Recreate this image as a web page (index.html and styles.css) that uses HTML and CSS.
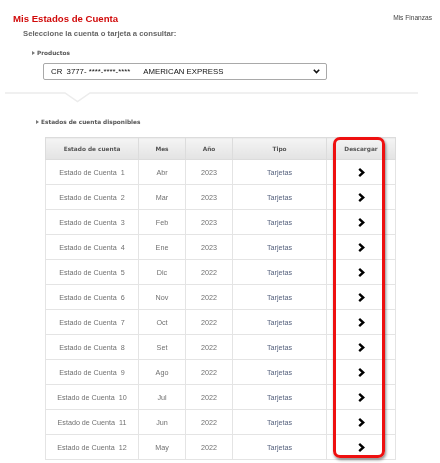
FILE: index.html
```html
<!DOCTYPE html>
<html lang="es">
<head>
<meta charset="utf-8">
<title>Mis Estados de Cuenta</title>
<link rel="stylesheet" href="styles.css">
</head>
<body>
<div class="page">
  <div class="top">
    <h1 class="title">Mis Estados de Cuenta</h1>
    <span class="crumb">Mis Finanzas</span>
  </div>
  <p class="subtitle">Seleccione la cuenta o tarjeta a consultar:</p>
  <div class="label label-products">Productos</div>
  <div class="select">
    <span class="select-text">CR&nbsp;&nbsp;3777-&nbsp;****-****-****&nbsp;&nbsp;&nbsp;&nbsp;&nbsp;&nbsp;AMERICAN EXPRESS</span>
    <svg class="select-arrow" width="7" height="5" viewBox="0 0 7 5"><path d="M0.8 0.8 L3.5 3.6 L6.2 0.8" fill="none" stroke="#111" stroke-width="1.6"/></svg>
  </div>
  <svg class="divider" width="440" height="12" viewBox="0 0 440 12"><polyline points="5,2 65,2 77.5,10.5 90,2 418,2" fill="none" stroke="#ececec" stroke-width="1.5"/></svg>
  <div class="label label-statements">Estados de cuenta disponibles</div>
  <div class="table-wrap">
    <table class="statements">
      <colgroup>
        <col class="c1"><col class="c2"><col class="c3"><col class="c4"><col class="c5">
      </colgroup>
      <thead>
        <tr><th>Estado de cuenta</th><th>Mes</th><th>Año</th><th>Tipo</th><th>Descargar</th></tr>
      </thead>
      <tbody id="rows"></tbody>
    </table>
    <div class="highlight"></div>
  </div>
</div>
<script src="app.js"></script>
</body>
</html>
```
FILE: app.js
```js
var data = [
  ["Abr","2023"],["Mar","2023"],["Feb","2023"],["Ene","2023"],
  ["Dic","2022"],["Nov","2022"],["Oct","2022"],["Set","2022"],
  ["Ago","2022"],["Jul","2022"],["Jun","2022"],["May","2022"]
];
var tbody = document.getElementById("rows");
var html = "";
data.forEach(function (d, i) {
  html += '<tr><td>Estado de Cuenta&nbsp;&nbsp;' + (i + 1) + '</td><td>' + d[0] + '</td><td>' + d[1] +
    '</td><td class="tipo">Tarjetas</td><td><svg class="chev" width="7" height="9" viewBox="0 0 7 9"><path d="M1.2 0.9 L5.2 4.5 L1.2 8.1" fill="none" stroke="#000" stroke-width="2.4"/></svg></td></tr>';
});
tbody.innerHTML = html;
```
FILE: styles.css
```css
* { box-sizing: border-box; }
body {
  margin: 0;
  background: #fff;
  font-family: "Liberation Sans", Arial, sans-serif;
  color: #666;
}
.page {
  width: 440px;
  height: 463px;
  overflow: hidden;
  will-change: transform;
}
.top {
  display: flex;
  justify-content: space-between;
  align-items: center;
  padding: 13px 8px 0 13px;
}
.title {
  margin: 0;
  font-size: 9.6px;
  line-height: 12px;
  font-weight: bold;
  color: #d10a0a;
}
.crumb {
  font-size: 6.6px;
  color: #444;
  line-height: 10px;
  margin-top: -2px;
}
.subtitle {
  margin: 4px 0 0 23px;
  font-size: 7.7px;
  line-height: 10px;
  font-weight: bold;
  color: #666;
}
.label {
  display: flex;
  align-items: center;
  font-family: "DejaVu Sans", Verdana, sans-serif;
  font-size: 5.8px;
  font-weight: bold;
  color: #555;
  line-height: 8px;
}
.label::before {
  content: "";
  display: block;
  width: 0;
  height: 0;
  border-top: 2.5px solid transparent;
  border-bottom: 2.5px solid transparent;
  border-left: 3px solid #777;
  margin-right: 2px;
}
.label-products {
  margin: 10px 0 0 32px;
}
.select {
  margin: 6px 0 0 43px;
  width: 284px;
  height: 17px;
  border: 1px solid #a9a9a9;
  border-radius: 2px;
  display: flex;
  align-items: center;
  justify-content: space-between;
  padding: 0 6px 0 7px;
  font-size: 7.8px;
  color: #111;
}
.divider {
  display: block;
  margin-top: 11px;
}
.label-statements {
  margin: 15px 0 0 36px;
}
.table-wrap {
  position: relative;
  margin: 11px 0 0 45px;
  width: 350px;
}
.statements {
  border-collapse: collapse;
  width: 350px;
  table-layout: fixed;
}
.c1 { width: 93px; }
.c2 { width: 47px; }
.c3 { width: 47px; }
.c4 { width: 94px; }
.c5 { width: 69px; }
.statements th {
  height: 22px;
  background: linear-gradient(#f4f4f4, #e3e3e3);
  border: 1px solid #dcdcdc;
  font-family: "DejaVu Sans", Verdana, sans-serif;
  font-size: 5.8px;
  font-weight: bold;
  color: #555;
  text-align: center;
  padding: 0;
}
.statements td {
  height: 25px;
  border: 1px solid #e4e4e4;
  font-size: 7.2px;
  color: #707070;
  text-align: center;
  padding: 0;
}
.statements td.tipo {
  color: #56627e;
}
.chev {
  display: block;
  margin: 0 auto;
}
.highlight {
  position: absolute;
  left: 288px;
  top: 0;
  width: 52px;
  height: 321px;
  border: 3px solid #ee1010;
  border-radius: 7px;
  box-shadow: 1px 2px 3px rgba(0, 0, 0, 0.45);
  pointer-events: none;
}
```
